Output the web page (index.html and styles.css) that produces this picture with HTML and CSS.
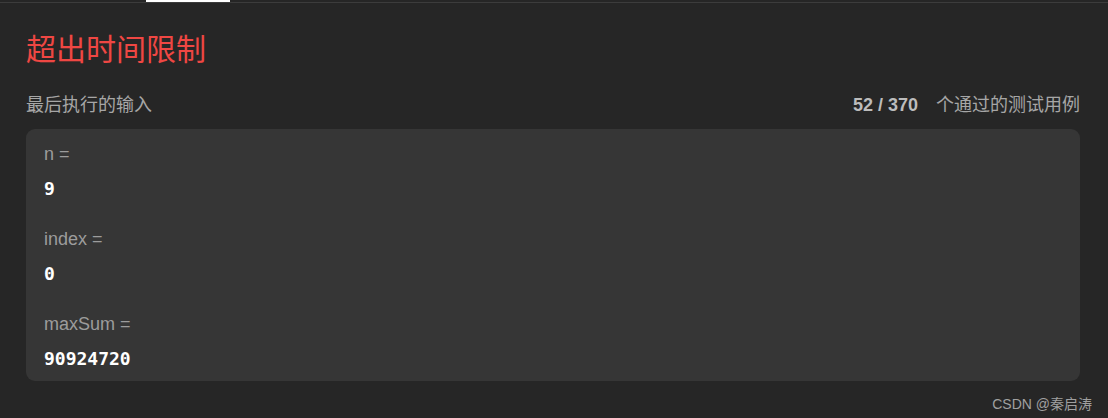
FILE: index.html
```html
<!DOCTYPE html>
<html lang="zh-CN">
<head>
    <meta charset="UTF-8">
    <meta name="viewport" content="width=device-width, initial-scale=1.0">
    <title>超出时间限制</title>
    <link rel="stylesheet" href="styles.css">
</head>
<body>
    <div class="tabs">
        <div class="tab-active"></div>
    </div>

    <div class="result">
        <h1 class="result-title">超出时间限制</h1>

        <div class="result-head">
            <span>最后执行的输入</span>
            <span><b class="count">52 / 370</b>个通过的测试用例</span>
        </div>

        <div class="case">
            <div class="case-item">
                <div class="case-label">n =</div>
                <div class="case-value">9</div>
            </div>
            <div class="case-item">
                <div class="case-label">index =</div>
                <div class="case-value">0</div>
            </div>
            <div class="case-item">
                <div class="case-label">maxSum =</div>
                <div class="case-value">90924720</div>
            </div>
        </div>
    </div>

    <div class="watermark">CSDN @秦启涛</div>
</body>
</html>
```

FILE: styles.css
```css
body {
    margin: 0;
    padding: 0;
    height: 418px;
    overflow: hidden;
    background-color: #262626;
    font-family: "Liberation Sans", "Noto Sans CJK SC", sans-serif;
}

.tabs {
    height: 2px;
    border-bottom: 1px solid #3c3c3c;
}

.tab-active {
    width: 84px;
    height: 2px;
    margin-left: 146px;
    background-color: #fff;
}

.result {
    padding: 0 28px 0 26px;
}

.result-title {
    margin: 27px 0 0 0;
    font-size: 30px;
    line-height: 40px;
    font-weight: normal;
    color: #ef4743;
}

.result-head {
    display: flex;
    justify-content: space-between;
    margin-top: 23px;
    font-size: 18px;
    line-height: 24px;
    color: #a6a6a6;
}

.count {
    margin-right: 18px;
    color: #bcbcbc;
}

.case {
    display: flex;
    flex-direction: column;
    gap: 26px;
    margin-top: 12px;
    padding: 13px 18px 10px;
    border-radius: 9px;
    background-color: #363636;
}

.case-label {
    margin-bottom: 11px;
    font-size: 18px;
    line-height: 24px;
    color: #9c9c9c;
}

.case-value {
    font-family: "DejaVu Sans Mono", monospace;
    font-size: 18px;
    line-height: 24px;
    font-weight: bold;
    color: #fff;
}

.watermark {
    margin-top: 13px;
    padding-right: 16px;
    text-align: right;
    font-size: 14px;
    line-height: 20px;
    color: #a0a0a0;
}
```
